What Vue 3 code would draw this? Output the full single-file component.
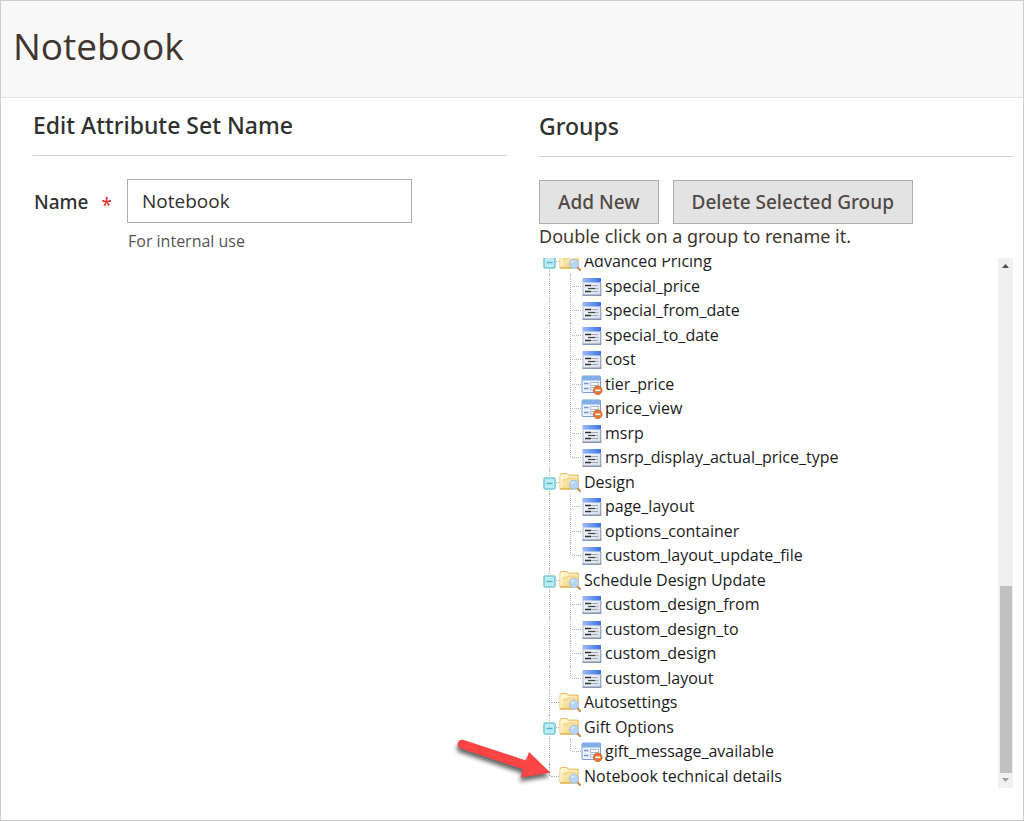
<script setup>
import { ref } from 'vue'

const name = ref('Notebook')

const groups = [
  {
    label: 'Advanced Pricing',
    items: [
      { label: 'special_price' },
      { label: 'special_from_date' },
      { label: 'special_to_date' },
      { label: 'cost' },
      { label: 'tier_price', system: true },
      { label: 'price_view', system: true },
      { label: 'msrp' },
      { label: 'msrp_display_actual_price_type' }
    ]
  },
  {
    label: 'Design',
    items: [
      { label: 'page_layout' },
      { label: 'options_container' },
      { label: 'custom_layout_update_file' }
    ]
  },
  {
    label: 'Schedule Design Update',
    items: [
      { label: 'custom_design_from' },
      { label: 'custom_design_to' },
      { label: 'custom_design' },
      { label: 'custom_layout' }
    ]
  },
  { label: 'Autosettings', items: [] },
  { label: 'Gift Options', items: [{ label: 'gift_message_available', system: true }] },
  { label: 'Notebook technical details', items: [] }
]

const rows = groups.flatMap((group, g) => [
  { label: group.label, kind: 'folder', open: group.items.length > 0, last: g === groups.length - 1 },
  ...group.items.map((item, i) => ({
    label: item.label,
    kind: item.system ? 'system' : 'attribute',
    last: i === group.items.length - 1
  }))
])
</script>

<template>
  <div class="page">
    <svg class="defs" width="0" height="0" aria-hidden="true">
      <defs>
        <linearGradient id="gFolder" x1="0" y1="0" x2="1" y2="1">
          <stop offset="0" stop-color="#fff8d8" />
          <stop offset="1" stop-color="#f1cb68" />
        </linearGradient>
        <linearGradient id="gBar" x1="0" y1="0" x2="1" y2="0">
          <stop offset="0" stop-color="#9dbcf5" />
          <stop offset="1" stop-color="#3a72e6" />
        </linearGradient>
        <linearGradient id="gBody" x1="0" y1="0" x2="1" y2="1">
          <stop offset="0" stop-color="#ffffff" />
          <stop offset="1" stop-color="#d3dcea" />
        </linearGradient>
      </defs>
    </svg>

    <header class="head">
      <h1>Notebook</h1>
    </header>

    <main class="columns">
      <section class="edit">
        <h2>Edit Attribute Set Name</h2>
        <div class="field">
          <label for="set-name">Name<span class="star">*</span></label>
          <div class="control">
            <input id="set-name" v-model="name" type="text" />
            <p class="note">For internal use</p>
          </div>
        </div>
      </section>

      <section class="groups">
        <h2>Groups</h2>
        <div class="buttons">
          <button type="button">Add New</button>
          <button type="button">Delete Selected Group</button>
        </div>
        <p class="hint">Double click on a group to rename it.</p>

        <div class="viewport">
          <ul class="tree">
            <li v-for="row in rows" :key="row.label" :class="['row', row.kind, { last: row.last, open: row.open }]">
              <span class="guide outer">
                <button v-if="row.open" type="button" class="toggle" :aria-label="'Collapse ' + row.label">
                  <svg width="13" height="13" viewBox="0 0 13 13">
                    <rect x="1" y="1" width="11" height="11" rx="1.5" fill="#bdebf2" stroke="#74cad8" stroke-width="1.6" />
                    <path d="M3.5 6.5h6" stroke="#4fb3c4" stroke-width="1.4" />
                  </svg>
                </button>
              </span>
              <span v-if="row.kind !== 'folder'" class="guide inner"></span>
              <svg v-if="row.kind === 'folder'" class="icon" width="22" height="20" viewBox="0 0 22 20">
                <path d="M1 3.2L2 1.500h6l1.2 1.6h10V17H1z" fill="url(#gFolder)" stroke="#e6bd62" />
                <path d="M2 16V4h5.500l1.500 1.200h9" fill="none" stroke="#fffbe6" />
                <path d="M4 8h3.500l1.500-2h7" fill="none" stroke="#ecca77" />
                <path d="M1 17h13" stroke="#dba945" />
                <path d="M18 16l3 3" stroke="#c9935a" stroke-width="2.400" stroke-linecap="round" />
                <circle cx="15" cy="12.800" r="4.500" fill="#b7d4f6" stroke="#a4c3ea" />
                <path d="M12.500 12q1-2 3-1.800" fill="none" stroke="#e7f3ff" stroke-width="1.200" />
              </svg>
              <svg v-else-if="row.kind === 'attribute'" class="icon" width="22" height="20" viewBox="0 0 22 20">
                <rect x="2" y="1" width="18" height="17.500" fill="url(#gBody)" />
                <rect x="1.500" y="1" width="18.500" height="4.500" fill="url(#gBar)" />
                <path d="M2 5.500v12.500" stroke="#a9b9d3" />
                <path d="M19.800 5.500v12.500" stroke="#8191b0" />
                <path d="M1.500 18.200h18.800" stroke="#6d7f9f" stroke-width="1.200" />
                <path d="M4 8.500h6M4 14.500h6" stroke="#333" stroke-width="1.600" />
                <path d="M7 11.500h7" stroke="#444" stroke-width="1.200" />
                <path d="M10 8.500h7M14 11.500h3M10 14.500h7" stroke="#a4a9b1" stroke-width="1.200" />
              </svg>
              <svg v-else class="icon" width="22" height="20" viewBox="0 0 22 20">
                <rect x="1" y="1" width="18.500" height="16.500" rx="1" fill="#edf4fd" stroke="#779fd6" />
                <rect x="1" y="1" width="18.500" height="4.500" fill="#83aee7" />
                <path d="M3 8.500h4.500M3 13.500h4.500" stroke="#6e99d5" stroke-width="1.500" />
                <path d="M9.500 7.500h8v3h-8zM9.500 12.500h5v2.500h-5z" fill="#fff" stroke="#adb9c8" />
                <circle cx="16.800" cy="15.300" r="4.300" fill="#e87432" stroke="#c75420" stroke-width=".7" />
                <path d="M14.300 15.300h5" stroke="#fff" stroke-width="1.700" />
              </svg>
              <span class="label">{{ row.label }}</span>
            </li>
          </ul>
          <div class="scrollbar" aria-hidden="true">
            <svg width="9" height="6" viewBox="0 0 9 6"><path d="M1 5l3.500-4L8 5z" fill="#505050" /></svg>
            <div class="thumb"></div>
            <svg width="9" height="6" viewBox="0 0 9 6"><path d="M1 1l3.500 4L8 1z" fill="#a0a0a0" /></svg>
          </div>
          <svg class="arrow" width="110" height="64" viewBox="0 0 110 64" aria-hidden="true">
            <path class="shape" d="M13 7.800L76 28.500L79 20L100.500 40.700L70.500 45.500L73.300 37.500L10.300 16.300A4.500 4.500 0 0 1 13 7.800z" fill="#fb4444" />
          </svg>
        </div>
      </section>
    </main>
  </div>
</template>

<style>
body {
  margin: 0;
}
</style>

<style scoped>
.page {
  box-sizing: border-box;
  min-height: 100vh;
  border: 1px solid #cdcdcd;
  background: #fff;
  color: #303030;
  font-family: "Open Sans", "Noto Sans", sans-serif;
  font-size: 16px;
}
.defs {
  position: absolute;
}
h1, h2, p, ul {
  margin: 0;
  padding: 0;
}
.head {
  box-sizing: border-box;
  height: 97px;
  padding: 17px 12px;
  background: #f8f8f8;
  border-bottom: 1px solid #e3e3e3;
}
h1 {
  color: #41362f;
  font-size: 37px;
  font-weight: 400;
  line-height: 56px;
}
.columns {
  display: grid;
  grid-template-columns: 1fr 1fr;
  gap: 32px;
  padding: 0 10px 0 32px;
}
h2 {
  padding: 11px 0 14px;
  border-bottom: 1px solid #d6d0c8;
  font-family: "Noto Sans", "Open Sans", sans-serif;
  font-size: 23px;
  font-weight: 500;
  line-height: 32px;
}
.groups {
  padding-top: 1px;
}
.field {
  display: flex;
  margin-top: 23px;
}
label {
  display: flex;
  justify-content: space-between;
  box-sizing: border-box;
  width: 94px;
  padding: 0 15px 0 1px;
  font-family: "Noto Sans", "Open Sans", sans-serif;
  font-size: 19px;
  font-weight: 500;
  line-height: 46px;
}
.star {
  color: #e22626;
  font-weight: 400;
  padding-top: 3px;
}
input {
  display: block;
  box-sizing: border-box;
  width: 285px;
  height: 44px;
  padding: 0 14px;
  border: 1px solid #adadad;
  background: #fff;
  color: #303030;
  font: 19px "Open Sans", "Noto Sans", sans-serif;
}
.note {
  padding: 6px 1px;
  color: #555;
  font-size: 16px;
  line-height: 24px;
}
.buttons {
  display: flex;
  gap: 14px;
  margin-top: 23px;
}
.buttons button {
  height: 44px;
  padding: 0 18px;
  border: 1px solid #adadad;
  border-radius: 0;
  background: #e3e3e3;
  color: #514943;
  font: 500 19px "Noto Sans", "Open Sans", sans-serif;
}
.hint {
  color: #41362f;
  font-family: "Noto Sans", "Open Sans", sans-serif;
  font-size: 18px;
  line-height: 24px;
}
.viewport {
  position: relative;
  display: flex;
  justify-content: space-between;
  height: 530px;
  margin-top: 10px;
}
.tree {
  display: grid;
  grid-auto-rows: 1fr;
  flex: 1;
  height: 539px;
  margin-top: -9px;
  list-style: none;
  clip-path: inset(9px 0 0 0);
}
.row {
  display: flex;
  align-items: center;
  color: #1c1c1c;
}
.guide {
  position: relative;
  align-self: stretch;
  width: 20px;
}
.guide::before, .guide::after {
  content: "";
  position: absolute;
}
.guide::before {
  left: 10px;
  top: 0;
  bottom: 0;
  border-left: 1px dotted #b0b0b0;
}
.folder .guide::after, .inner::after {
  left: 12px;
  right: 0;
  top: 50%;
  border-top: 1px dotted #b0b0b0;
}
.inner {
  width: 21px;
  margin-left: 1px;
}
.last .inner::before, .folder.last .outer::before {
  bottom: 50%;
}
.toggle {
  position: absolute;
  z-index: 1;
  left: 4px;
  top: 7px;
  width: 13px;
  height: 13px;
  padding: 0;
  border: 0;
  background: #fff;
}
.toggle svg {
  display: block;
}
.icon {
  flex: none;
}
.attribute .icon, .system .icon {
  margin-top: 2px;
}
.label {
  padding-left: 2px;
  white-space: nowrap;
  line-height: 24px;
}
.folder .label {
  padding-left: 3px;
}
.scrollbar {
  display: flex;
  flex-direction: column;
  align-items: center;
  justify-content: space-between;
  box-sizing: border-box;
  width: 15px;
  padding: 5px 0;
  background: #f0f0f0;
}
.thumb {
  width: 12px;
  height: 187px;
  margin: auto 0 4px;
  background: #c1c1c1;
}
.arrow {
  position: absolute;
  left: -89px;
  bottom: -8px;
}
.shape {
  filter: drop-shadow(-1px 4px 2px #0009);
}
</style>
